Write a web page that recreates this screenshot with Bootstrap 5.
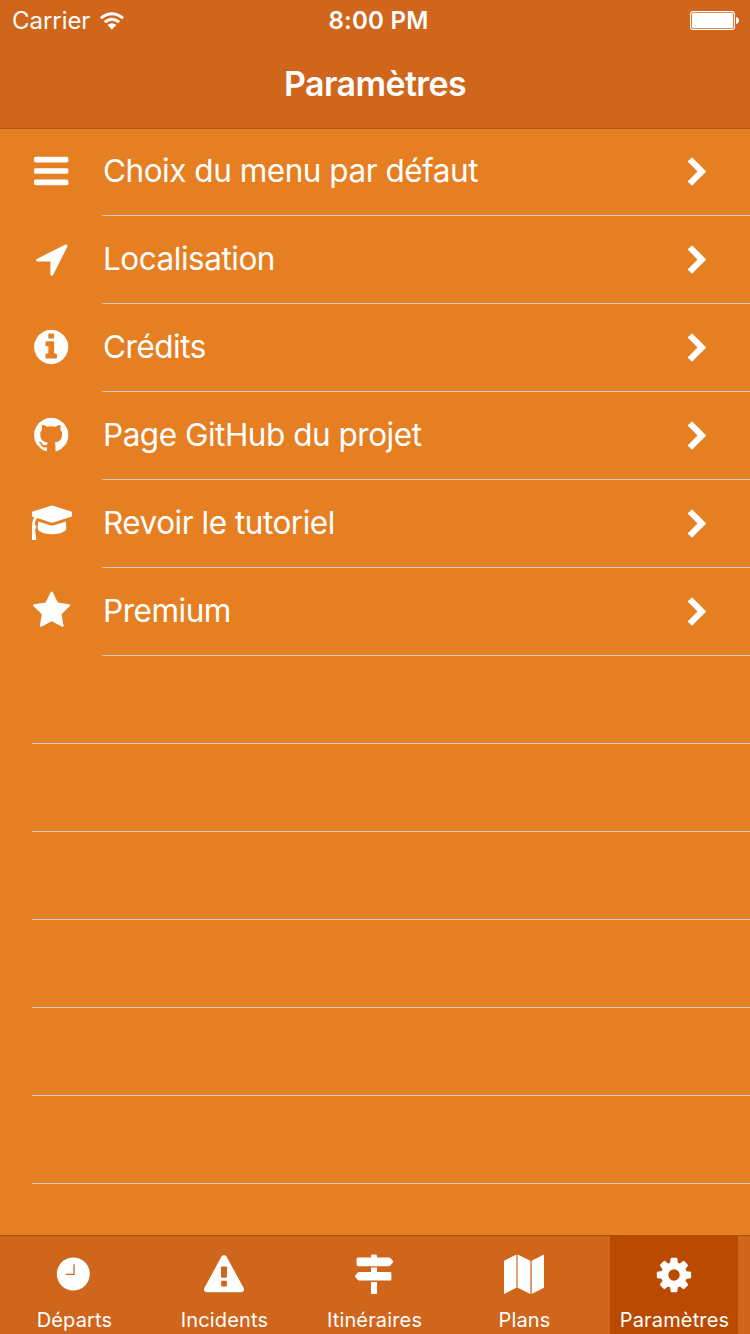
<!DOCTYPE html>
<html lang="fr">
<head>
<meta charset="utf-8">
<meta name="viewport" content="width=device-width, initial-scale=1">
<title>Paramètres</title>
<link rel="stylesheet" href="https://cdn.jsdelivr.net/npm/bootstrap@5.3.0/dist/css/bootstrap.min.css">
<style>
  body { font-family: Inter, "Liberation Sans", sans-serif; background: #e67e22; color: #fff; }
  svg { display: block; fill: #fff; flex: none; }
  .app-head { height: 129px; background: #d0651c; border-bottom: 1px solid #a65818; z-index: 2; }
  .status-row { height: 41px; padding: 1px 11px 0 12px; font-size: 24px; line-height: 40px; }
  .carrier { letter-spacing: -.05px; }
  .wifi { margin-left: 9px; }
  .clock-text { font-weight: 600; font-size: 24px; letter-spacing: .25px; padding-left: 6px; }
  .app-title { font-size: 34px; font-weight: 600; line-height: 88px; letter-spacing: -.6px; margin: -1px 0 0; }
  .settings { margin-top: -1px; }
  .settings .item { height: 88px; padding-left: 32px; }
  .settings .item > svg { margin-bottom: 3px; }
  .item-body { height: 88px; margin-left: 30px; padding: 0 37px 1px 1px; border-bottom: 1px solid #c8c7cc; }
  .item-text { font-size: 31.5px; line-height: 86px; letter-spacing: -.48px; }
  .blank { height: 88px; margin-left: 32px; border-bottom: 1px solid #c8c7cc; }
  .tabs { height: 99px; background: #d0651c; border-top: 1px solid #a9540f; padding-right: 1px; margin-top: auto; }
  .tabs .tab { width: 150px; }
  .tabs .tab-in { width: 128px; height: 98px; padding-top: 19px; font-size: 20px; letter-spacing: .15px; line-height: 24px; }
  .tabs .tab-in span { margin-top: 13px; padding-left: 1px; }
  .tabs .active-tab { background: #b94a00; }
</style>
</head>
<body class="overflow-hidden">
<div class="d-flex flex-column vh-100">
  <header class="app-head position-relative flex-shrink-0">
    <div class="status-row row g-0 align-items-center">
      <div class="col d-flex align-items-center">
        <span class="carrier">Carrier</span>
        <svg class="wifi" width="26" height="20" viewBox="0 0 26 20"><path d="M.8 6.200Q12.700-3.700 25 6.200L23 8.300Q12.900.200 2.900 8.300z"/><path d="M4.700 10.100Q12.900 3.300 21.200 10.100L19.100 12.200Q12.900 7.200 6.800 12.200z"/><path d="M8.500 13.900Q12.900 10.400 17.400 13.900L12.900 18.500z"/></svg>
      </div>
      <div class="col-auto clock-text">8:00 PM</div>
      <div class="col d-flex justify-content-end">
        <svg width="49" height="20" viewBox="0 0 49 20"><rect x=".6" y=".6" width="43.800" height="17.800" rx="2.500" fill="none" stroke="#fff" stroke-width="1.100"/><rect x="2" y="2" width="41" height="15" rx="1.200"/><path d="M46 6q3 .8 3 3.500t-3 3.500z"/></svg>
      </div>
    </div>
    <h1 class="app-title text-center">Paramètres</h1>
  </header>

  <main class="settings flex-shrink-0">
    <div class="item d-flex align-items-center">
      <svg width="40" height="40" viewBox="36 0 1792 1792"><path d="M1664 1344v128q0 26-19 45t-45 19h-1408q-26 0-45-19t-19-45v-128q0-26 19-45t45-19h1408q26 0 45 19t19 45zm0-512v128q0 26-19 45t-45 19h-1408q-26 0-45-19t-19-45v-128q0-26 19-45t45-19h1408q26 0 45 19t19 45zm0-512v128q0 26-19 45t-45 19h-1408q-26 0-45-19t-19-45v-128q0-26 19-45t45-19h1408q26 0 45 19t19 45z"/></svg>
      <div class="item-body flex-grow-1 d-flex justify-content-between align-items-center"><span class="item-text">Choix du menu par défaut</span><svg width="31" height="31" viewBox="0 -64 1792 1792"><use href="#chev"/></svg></div>
    </div>
    <div class="item d-flex align-items-center">
      <svg width="40" height="40" viewBox="8 12 1792 1792"><path d="M1593 349l-640 1280q-17 35-57 35-5 0-15-2-22-5-35.500-22.500t-13.500-39.500v-576h-576q-22 0-39.500-13.500t-22.500-35.500 4-42 29-30l1280-640q13-7 29-7 27 0 45 19 15 14 18.500 34.500t-6.500 39.500z"/></svg>
      <div class="item-body flex-grow-1 d-flex justify-content-between align-items-center"><span class="item-text">Localisation</span><svg width="31" height="31" viewBox="0 -64 1792 1792"><use href="#chev"/></svg></div>
    </div>
    <div class="item d-flex align-items-center">
      <svg width="40" height="40" viewBox="36 0 1792 1792"><path d="M1152 1376v-160q0-14-9-23t-23-9h-96v-512q0-14-9-23t-23-9h-320q-14 0-23 9t-9 23v160q0 14 9 23t23 9h96v320h-96q-14 0-23 9t-9 23v160q0 14 9 23t23 9h448q14 0 23-9t9-23zm-128-896v-160q0-14-9-23t-23-9h-192q-14 0-23 9t-9 23v160q0 14 9 23t23 9h192q14 0 23-9t9-23zm640 416q0 209-103 385.500t-279.500 279.500-385.500 103-385.500-103-279.500-279.500-103-385.500 103-385.500 279.500-279.500 385.500-103 385.500 103 279.500 279.500 103 385.500z"/></svg>
      <div class="item-body flex-grow-1 d-flex justify-content-between align-items-center"><span class="item-text">Crédits</span><svg width="31" height="31" viewBox="0 -64 1792 1792"><use href="#chev"/></svg></div>
    </div>
    <div class="item d-flex align-items-center">
      <svg width="40" height="40" viewBox="36 0 1792 1792"><path d="M896 128q209 0 385.500 103t279.500 279.500 103 385.500q0 251-146.500 451.500t-378.500 277.500q-27 5-40-7t-13-30q0-3 .5-76.500t.5-134.500q0-97-52-142 57-6 102.500-18t94-39 81-66.500 53-105 20.500-150.500q0-119-79-206 37-91-8-204-28-9-81 11t-92 44l-38 24q-93-26-192-26t-192 26q-16-11-42.500-27t-83.500-38.500-85-13.500q-45 113-8 204-79 87-79 206 0 85 20.500 150t52.500 105 80.500 67 94 39 102.500 18q-39 36-49 103-21 10-45 15t-57 5-65.500-21.500-55.500-62.500q-19-32-48.500-52t-49.500-24l-20-3q-21 0-29 4.500t-5 11.500 9 14 13 12l7 5q22 10 43.500 38t31.500 51l10 23q13 38 44 61.500t67 30 69.500 7 55.500-3.500l23-4q0 38 .5 88.500t.5 54.500q0 18-13 30t-40 7q-232-77-378.500-277.500t-146.500-451.500q0-209 103-385.500t279.500-279.500 385.500-103z"/></svg>
      <div class="item-body flex-grow-1 d-flex justify-content-between align-items-center"><span class="item-text">Page GitHub du projet</span><svg width="31" height="31" viewBox="0 -64 1792 1792"><use href="#chev"/></svg></div>
    </div>
    <div class="item d-flex align-items-center">
      <svg width="40" height="40" viewBox="256 12 1792 1792"><path d="M1774 836l18 316q4 69-82 128t-235 93.500-323 34.500-323-34.500-235-93.500-82-128l18-316 574 181q22 7 48 7t48-7zm530-324q0 23-22 31l-1120 352q-4 1-10 1t-10-1l-652-206q-43 34-71 111.500t-34 178.500q63 36 63 109 0 69-58 107l58 433q2 14-8 25-9 11-24 11h-192q-15 0-24-11-10-11-8-25l58-433q-58-38-58-107 0-73 65-111 11-207 98-330l-333-104q-22-8-22-31t22-31l1120-352q4-1 10-1t10 1l1120 352q22 8 22 31z"/></svg>
      <div class="item-body flex-grow-1 d-flex justify-content-between align-items-center"><span class="item-text">Revoir le tutoriel</span><svg width="31" height="31" viewBox="0 -64 1792 1792"><use href="#chev"/></svg></div>
    </div>
    <div class="item d-flex align-items-center">
      <svg width="40" height="40" viewBox="14 12 1792 1792"><path d="M1728 647q0 22-26 48l-363 354 86 500q1 7 1 20 0 21-10.500 35.500t-30.500 14.500q-19 0-40-12l-449-236-449 236q-22 12-40 12-21 0-31.500-14.500t-10.500-35.500q0-6 2-20l86-500-364-354q-25-27-25-48 0-37 56-46l502-73 225-455q19-41 49-41t49 41l225 455 502 73q56 9 56 46z"/></svg>
      <div class="item-body flex-grow-1 d-flex justify-content-between align-items-center"><span class="item-text">Premium</span><svg width="31" height="31" viewBox="0 -64 1792 1792"><path id="chev" d="M1363 877l-742 742q-19 19-45 19t-45-19l-166-166q-19-19-19-45t19-45l531-531-531-531q-19-19-19-45t19-45l166-166q19-19 45-19t45 19l742 742q19 19 19 45t-19 45z"/></svg></div>
    </div>
    <div class="blank"></div><div class="blank"></div><div class="blank"></div>
    <div class="blank"></div><div class="blank"></div><div class="blank"></div>
  </main>

  <nav class="tabs d-flex flex-shrink-0 overflow-hidden justify-content-end">
    <div class="tab flex-shrink-0 d-flex justify-content-center"><div class="tab-in d-flex flex-column align-items-center">
      <svg width="40" height="40" viewBox="0 0 40 40"><circle cx="19.300" cy="19" r="16.500"/><path d="M20 9.200V19.400H11.700" fill="none" stroke="#d0651c" stroke-width="1.300"/></svg><span>Départs</span></div></div>
    <div class="tab flex-shrink-0 d-flex justify-content-center"><div class="tab-in d-flex flex-column align-items-center">
      <svg width="40" height="40" viewBox="0 0 1792 1792"><path d="M1024 1375v-190q0-14-9.500-23.500t-22.500-9.500h-192q-13 0-22.500 9.500t-9.500 23.500v190q0 14 9.500 23.500t22.500 9.500h192q13 0 22.500-9.500t9.500-23.500zm-2-374l18-459q0-12-10-19-13-11-24-11h-220q-11 0-24 11-10 7-10 21l17 457q0 10 10 16.500t24 6.500h185q14 0 23.500-6.500t10.500-16.500zm-14-934l768 1408q35 63-2 126-17 29-46.500 46t-63.500 17h-1536q-34 0-63.500-17t-46.500-46q-37-63-2-126l768-1408q17-31 47-49t65-18 65 18 47 49z"/></svg><span>Incidents</span></div></div>
    <div class="tab flex-shrink-0 d-flex justify-content-center"><div class="tab-in d-flex flex-column align-items-center">
      <svg class="overflow-visible" width="40" height="40" viewBox="0 0 40 40"><path d="M17 2.400V1Q17-.6 18.500-.6h3Q23-.6 23 1v1.400H34.700q1 0 1.700.7l2.500 3q.6.700 0 1.400l-2.500 3q-.7.700-1.700.7H4Q2.600 11.200 2.600 9.800V3.800Q2.600 2.400 4 2.400zM17 12.500h6v4.400H36q1.400 0 1.400 1.400v6q0 1.300-1.400 1.300H5.500q-1 0-1.700-.7l-2.500-3q-.6-.7 0-1.400l2.500-3q.7-.6 1.700-.6H17zM17 27h6v11q0 1-1 1h-4q-1 0-1-1z"/></svg><span>Itinéraires</span></div></div>
    <div class="tab flex-shrink-0 d-flex justify-content-center"><div class="tab-in d-flex flex-column align-items-center">
      <svg class="overflow-visible" width="40" height="40" viewBox="0 0 40 40"><path d="M0 5.700L12.400-.4V32.800L0 39zM13.600-.4L26.400 5.700V39L13.600 32.800zM27.700 5.700L40-.4V32.800L27.700 39z"/></svg><span>Plans</span></div></div>
    <div class="tab flex-shrink-0 d-flex justify-content-center"><div class="tab-in active-tab d-flex flex-column align-items-center">
      <svg width="40" height="40" viewBox="0 0 1792 1792"><path d="M1152 896q0-106-75-181t-181-75-181 75-75 181 75 181 181 75 181-75 75-181zm512-109v222q0 12-8 23t-20 13l-185 28q-19 54-39 91 35 50 107 138 10 12 10 25t-9 23q-27 37-99 108t-94 71q-12 0-26-9l-138-108q-44 23-91 38-16 136-29 186-7 28-36 28h-222q-14 0-24.500-8.500t-11.500-21.500l-28-184q-49-16-90-37l-141 107q-10 9-25 9-14 0-25-11-126-114-165-168-7-10-7-23 0-12 8-23 15-21 51-66.500t54-70.500q-27-50-41-99l-183-27q-13-2-21-12.500t-8-23.500v-222q0-12 8-23t19-13l186-28q14-46 39-92-40-57-107-138-10-12-10-24 0-10 9-23 26-36 98.500-107.500t94.500-71.500q13 0 26 10l138 107q44-23 91-38 16-136 29-186 7-28 36-28h222q14 0 24.500 8.500t11.500 21.500l28 184q49 16 90 37l142-107q9-9 24-9 13 0 25 10 129 119 165 170 7 8 7 22 0 12-8 23-15 21-51 66.500t-54 70.500q26 50 41 98l183 28q13 2 21 12.500t8 23.500z"/></svg><span>Paramètres</span></div></div>
  </nav>
</div>
<script src="https://cdn.jsdelivr.net/npm/bootstrap@5.3.0/dist/js/bootstrap.bundle.min.js"></script>
</body>
</html>
